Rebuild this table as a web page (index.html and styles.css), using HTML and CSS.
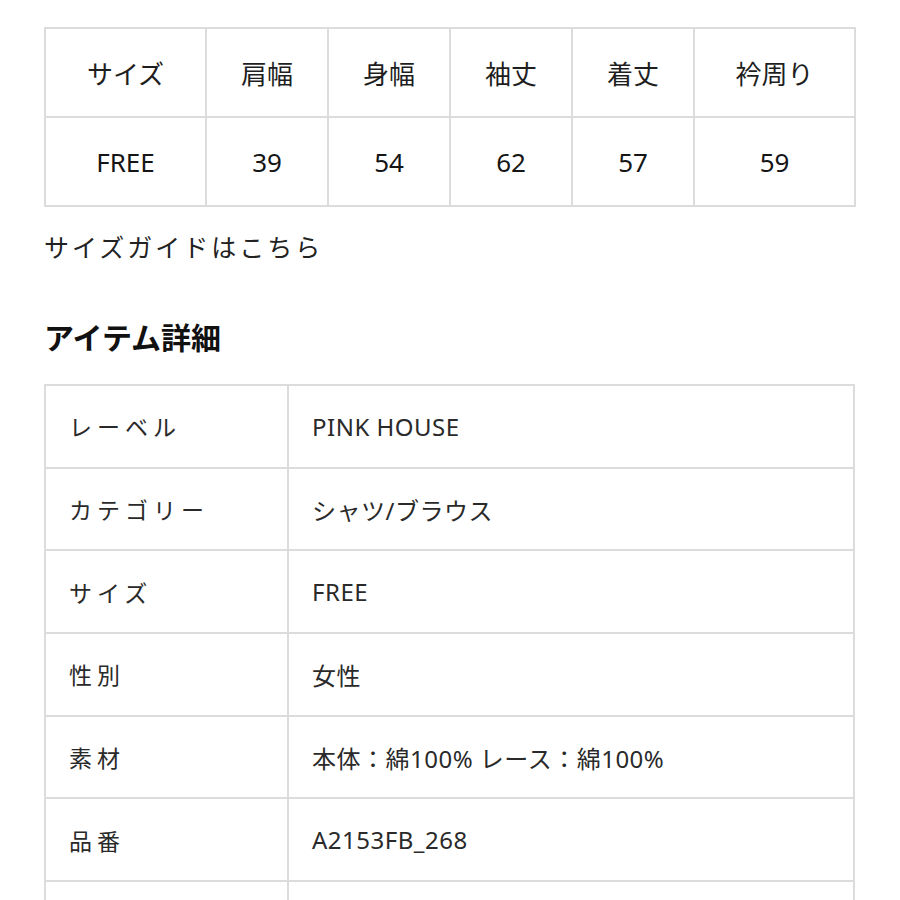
FILE: index.html
```html
<!DOCTYPE html>
<html lang="ja">
<head>
<meta charset="utf-8">
<link rel="stylesheet" href="styles.css">
</head>
<body>
<div class="page">
  <table class="size-table">
    <colgroup>
      <col class="c-wide"><col class="c-mid"><col class="c-mid"><col class="c-mid"><col class="c-mid"><col class="c-wide">
    </colgroup>
    <tr>
      <td>サイズ</td><td>肩幅</td><td>身幅</td><td>袖丈</td><td>着丈</td><td>衿周り</td>
    </tr>
    <tr class="nums">
      <td>FREE</td><td>39</td><td>54</td><td>62</td><td>57</td><td>59</td>
    </tr>
  </table>
  <p class="guide">サイズガイドはこちら</p>
  <h2 class="heading">アイテム詳細</h2>
  <table class="detail-table">
    <colgroup><col class="d-label"><col></colgroup>
    <tr><th>レーベル</th><td>PINK HOUSE</td></tr>
    <tr><th>カテゴリー</th><td>シャツ/ブラウス</td></tr>
    <tr><th>サイズ</th><td>FREE</td></tr>
    <tr><th>性別</th><td>女性</td></tr>
    <tr><th>素材</th><td>本体：綿100% レース：綿100%</td></tr>
    <tr><th>品番</th><td>A2153FB_268</td></tr>
    <tr><th>&nbsp;</th><td>&nbsp;</td></tr>
  </table>
</div>
</body>
</html>
```
FILE: styles.css
```css
html, body {
  margin: 0;
  padding: 0;
  background: #fff;
}
body {
  font-family: "Noto Sans CJK JP", "Noto Sans", sans-serif;
  color: #222;
}
.page {
  padding: 27px 45px 0 44px;
}
table {
  border-collapse: collapse;
  width: 811px;
  table-layout: fixed;
}
.size-table td {
  border: 2px solid #dcdcdc;
  height: 87px;
  text-align: center;
  vertical-align: middle;
  font-size: 26px;
  padding: 0;
  color: #1e1e1e;
}
.size-table .nums td {
  font-family: "Noto Sans", sans-serif;
  font-weight: 400;
  font-size: 26px;
  color: #151515;
}
.c-wide { width: 161px; }
.c-mid { width: 122px; }
.guide {
  margin: 19px 0 0 0;
  font-size: 25px;
  letter-spacing: 3px;
  line-height: 40px;
  color: #222;
}
.heading {
  margin: 50px 0 0 0;
  font-size: 30px;
  font-weight: 700;
  line-height: 40px;
  color: #111;
}
.detail-table {
  margin-top: 28px;
}
.d-label { width: 243px; }
.detail-table th,
.detail-table td {
  border: 2px solid #dcdcdc;
  height: 80.7px;
  padding: 0 0 0 23px;
  text-align: left;
  vertical-align: middle;
  font-size: 23px;
  font-weight: 400;
  color: #2a2a2a;
}
.detail-table th {
  letter-spacing: 5px;
}
.detail-table td {
  font-family: "Noto Sans", "Noto Sans CJK JP", sans-serif;
  font-size: 24px;
  letter-spacing: 0.5px;
}
```
